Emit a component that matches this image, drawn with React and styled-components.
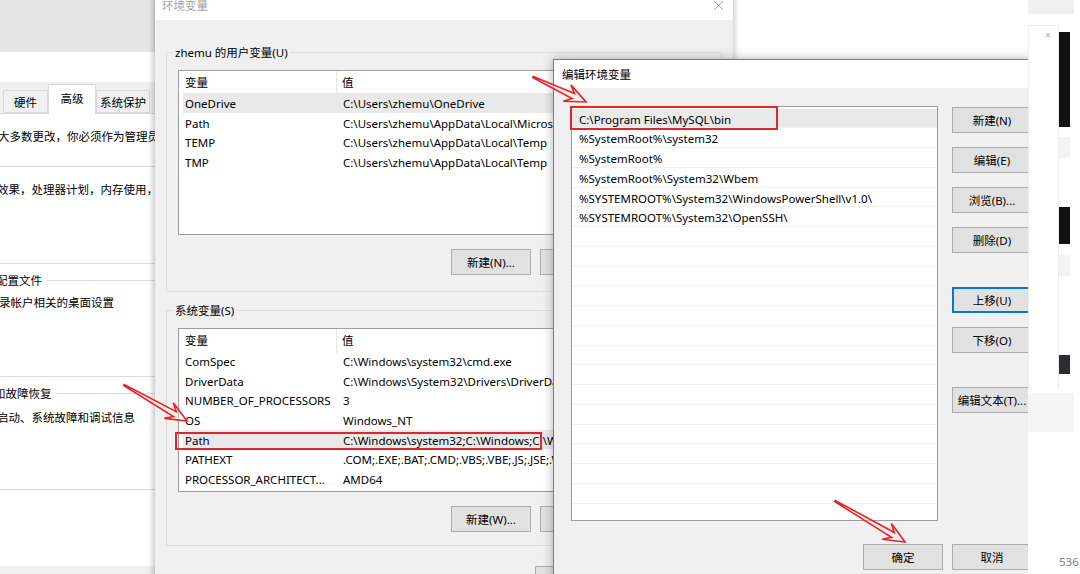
import React from 'react';
import styled, { createGlobalStyle } from 'styled-components';

const Global = createGlobalStyle`
  html, body { margin: 0; padding: 0; background: #fff; }
  body {
    width: 1080px; height: 574px; overflow: hidden;
    font-family: "Noto Sans", "Noto Sans CJK SC", sans-serif;
    font-size: 11.5px; color: #000;
  }
  * { box-sizing: border-box; }
`;

const Desktop = styled.div`
  position: relative; width: 1080px; height: 574px; overflow: hidden; background: #fff;
`;

/* ---------- System properties (behind, left) ---------- */
const SysWin = styled.div`
  position: absolute; left: 0; top: 0; width: 160px; height: 574px;
  background: #fff; display: flex; flex-direction: column; overflow: hidden; z-index: 1;
`;
const SysTop = styled.div`height: 52px; background: #e6e6e6; flex: none;`;
const TabStrip = styled.div`
  margin-top: 30px; height: 32px; background: #f0f0f0; flex: none;
  display: flex; align-items: flex-end; padding-left: 3px;
  border-bottom: 1px solid #d9d9d9;
`;
const Tab = styled.div`
  width: ${p => p.$w}px; height: ${p => (p.$active ? 30 : 23)}px;
  margin-bottom: ${p => (p.$active ? -1 : 0)}px;
  background: ${p => (p.$active ? '#fff' : '#f0f0f0')};
  border: 1px solid #d9d9d9; border-bottom: ${p => (p.$active ? 'none' : '1px solid #d9d9d9')};
  display: flex; align-items: ${p => (p.$active ? 'flex-start' : 'center')};
  padding-top: ${p => (p.$active ? 5 : 0)}px;
  justify-content: center; flex: none;
`;
const SysBody = styled.div`flex: 1; display: flex; flex-direction: column; background: #fff;`;
const Clip = styled.div`
  white-space: nowrap; line-height: 18px; height: 18px;
  margin-top: ${p => p.$mt}px; margin-left: -${p => p.$shift}px; flex: none;
`;
const Rule = styled.div`height: 1px; background: #dcdcdc; margin-top: ${p => p.$mt}px; flex: none;`;
const LabelRow = styled.div`
  display: flex; align-items: center; height: 18px; flex: none;
  margin-top: ${p => p.$mt}px; margin-left: -${p => p.$shift}px; white-space: nowrap;
  &::after { content: ''; flex: 1; height: 1px; background: #dcdcdc; margin-left: 4px; }
`;
const SysFoot = styled.div`margin-top: auto; height: 8px; background: #f0f0f0; flex: none;`;

/* ---------- Environment variables window ---------- */
const EnvWin = styled.div`
  position: absolute; left: 155px; top: -10px; width: 578px; height: 600px;
  background: #f0f0f0; z-index: 2; overflow: hidden;
  box-shadow: -2px 0 6px rgba(0,0,0,0.22), 2px 0 6px rgba(0,0,0,0.15);
  display: flex; flex-direction: column;
`;
const TitleBar = styled.div`
  height: ${p => p.$h}px; background: #fff; flex: none;
  display: flex; align-items: center; padding-left: ${p => p.$pl}px;
  color: ${p => (p.$inactive ? '#a3a3a3' : '#000')};
`;
const TitleText = styled.span`flex: 1;`;
const CloseX = styled.svg`width: 11px; height: 11px; margin-right: 9px; flex: none;`;
const EnvBody = styled.div`padding: 0 11px; display: flex; flex-direction: column;`;
const Group = styled.div`
  position: relative; margin-top: ${p => p.$mt}px;
  border: 1px solid #dcdcdc; padding: 17px 11px ${p => p.$pb}px 11px;
`;
const Legend = styled.span`
  position: absolute; top: -8px; left: 6px; padding: 0 2px;
  background: #f0f0f0; line-height: 16px; white-space: nowrap;
`;
const ListBox = styled.div`
  height: ${p => p.$h}px; background: #fff; border: 1px solid #9c9c9c;
`;
const Header = styled.div`
  display: grid; grid-template-columns: 158px 1fr; height: 22px; line-height: 24px;
`;
const HeadCell = styled.div`
  padding-left: ${p => (p.$first ? 6 : 5)}px;
  border-right: ${p => (p.$first ? '1px solid #e5e5e5' : 'none')};
`;
const VarRow = styled.div`
  position: relative; display: grid; grid-template-columns: 154px 1fr;
  margin-left: 4px; height: 19.7px;
  background: ${p => (p.$sel ? '#e9e9e9' : 'transparent')};
`;
const Cell = styled.div`
  white-space: nowrap; overflow: hidden; height: 19.7px; line-height: 21.5px;
  padding-left: ${p => (p.$first ? 2 : 6)}px;
`;
const Mark = styled.div`
  position: absolute; pointer-events: none;
  left: ${p => p.$l}px; top: ${p => p.$t}px; width: ${p => p.$w}px; height: ${p => p.$h}px;
  border: 2px solid #e3252b;
`;
const BtnRow = styled.div`
  display: flex; justify-content: flex-end; gap: 9px;
  margin-top: ${p => p.$mt}px; padding-right: ${p => p.$pr}px;
`;
const Btn = styled.div`
  width: 80px; height: 26px; flex: none;
  background: #e1e1e1; border: ${p => (p.$focus ? '2px solid #0078d7' : '1px solid #adadad')};
  display: flex; align-items: center; justify-content: center; white-space: nowrap;
`;

/* ---------- Edit environment variable window ---------- */
const EditWin = styled.div`
  position: absolute; left: 553px; top: 59px; width: 480px; height: 530px;
  background: #f0f0f0; border: 1px solid #7d7d7d; z-index: 3; overflow: hidden;
  box-shadow: 0 0 10px rgba(0,0,0,0.3);
  display: flex; flex-direction: column;
`;
const EditBody = styled.div`padding: 18px 0 0 17px; display: flex; flex-direction: column;`;
const EditMain = styled.div`display: flex; align-items: flex-start;`;
const EditList = styled.div`
  width: 367px; height: 415px; background: #fff; border: 1px solid #9c9c9c;
  padding-top: 1.5px; flex: none; display: flex; flex-direction: column;
`;
const EditRows = styled.div`overflow: hidden; flex: 1; display: flex; flex-direction: column;`;
const EditRow = styled.div`
  height: 19.75px; line-height: 21px; flex: none; overflow: hidden;
  border-bottom: 1px solid #f0f0f0; padding-left: 7px; white-space: nowrap;
  background: ${p => (p.$sel ? '#e9e9e9' : '#fff')};
`;
const BtnCol = styled.div`
  margin-left: 14px; padding-top: 1px; display: flex; flex-direction: column; gap: 34px;
`;
const BtnGroup = styled.div`display: flex; flex-direction: column; gap: 14px;`;

/* ---------- right strip (another window) ---------- */
const Strip = styled.div`
  position: absolute; left: 1028px; top: 0; width: 52px; height: 574px;
  background: #fff; z-index: 4; display: flex; flex-direction: column;
`;
const StripTop = styled.div`width: 46px; height: 14px; background: #f0f0f0; flex: none;`;
const PaneRow = styled.div`margin-top: 11px; height: 365px; display: flex; flex: none;`;
const Pane = styled.div`
  width: 31px; border-left: 1px solid #f0f0f0; border-top: 1px solid #ececec;
  border-right: 1px solid #ececec; display: flex; justify-content: flex-end;
  padding: 3px 7px 0 0; color: #b0b0b0; font-size: 11px; line-height: 11px;
`;
const BarCol = styled.div`width: 11px; display: flex; flex-direction: column;`;
const Bar = styled.div`
  margin-top: ${p => p.$mt}px; height: ${p => p.$h}px; background: ${p => p.$c}; flex: none;
`;
const StripBlock = styled.div`margin-top: 3px; width: 46px; height: 39px; background: #f5f5f5; flex: none;`;
const PageNo = styled.div`margin-top: 123px; padding-left: 31px; line-height: 14px; color: #808080;`;

const Overlay = styled.svg`position: absolute; left: 0; top: 0; z-index: 5; pointer-events: none;`;

function arrowPoints([x1, y1], [x2, y2]) {
  const dx = x2 - x1, dy = y2 - y1, L = Math.hypot(dx, dy);
  const ux = dx / L, uy = dy / L, nx = -uy, ny = ux;
  const p = (t, w) => `${(x1 + ux * t + nx * w).toFixed(1)},${(y1 + uy * t + ny * w).toFixed(1)}`;
  return [p(0, 0.6), p(L - 14, 2.8), p(L - 21, 9), p(L, 0), p(L - 21, -9), p(L - 14, -2.8), p(0, -0.6)].join(' ');
}

const Close = () => (
  <CloseX viewBox="0 0 11 11">
    <path d="M1 1 L10 10 M10 1 L1 10" stroke="#a0a0a0" strokeWidth="1" fill="none" />
  </CloseX>
);

const userVars = [
  ['OneDrive', 'C:\\Users\\zhemu\\OneDrive', true],
  ['Path', 'C:\\Users\\zhemu\\AppData\\Local\\Microsoft\\WindowsApps;'],
  ['TEMP', 'C:\\Users\\zhemu\\AppData\\Local\\Temp'],
  ['TMP', 'C:\\Users\\zhemu\\AppData\\Local\\Temp'],
];
const sysVars = [
  ['ComSpec', 'C:\\Windows\\system32\\cmd.exe'],
  ['DriverData', 'C:\\Windows\\System32\\Drivers\\DriverData'],
  ['NUMBER_OF_PROCESSORS', '3'],
  ['OS', 'Windows_NT'],
  ['Path', 'C:\\Windows\\system32;C:\\Windows;C:\\Windows\\System32\\Wbem;', true, true],
  ['PATHEXT', '.COM;.EXE;.BAT;.CMD;.VBS;.VBE;.JS;.JSE;.WSF;.WSH;.MSC'],
  ['PROCESSOR_ARCHITECT...', 'AMD64'],
];
const pathEntries = [
  'C:\\Program Files\\MySQL\\bin',
  '%SystemRoot%\\system32',
  '%SystemRoot%',
  '%SystemRoot%\\System32\\Wbem',
  '%SYSTEMROOT%\\System32\\WindowsPowerShell\\v1.0\\',
  '%SYSTEMROOT%\\System32\\OpenSSH\\',
];

function VarList({ rows, h }) {
  return (
    <ListBox $h={h}>
      <Header>
        <HeadCell $first>变量</HeadCell>
        <HeadCell>值</HeadCell>
      </Header>
      {rows.map(([n, v, sel, mark]) => (
        <VarRow key={n + v} $sel={sel}>
          <Cell $first>{n}</Cell>
          <Cell>{v}</Cell>
          {mark && <Mark $l={-8} $t={2} $w={367} $h={18} />}
        </VarRow>
      ))}
    </ListBox>
  );
}

export default function App() {
  const empty = Array.from({ length: 16 });
  return (
    <Desktop>
      <Global />

      <SysWin>
        <SysTop />
        <TabStrip>
          <Tab $w={45}>硬件</Tab>
          <Tab $w={48} $active>高级</Tab>
          <Tab $w={54}>系统保护</Tab>
        </TabStrip>
        <SysBody>
          <Clip $mt={14} $shift={48}>若要进行大多数更改，你必须作为管理员登录。</Clip>
          <Rule $mt={20} />
          <Clip $mt={14} $shift={26}>视觉效果，处理器计划，内存使用，以及虚拟内存</Clip>
          <Rule $mt={64} />
          <LabelRow $mt={7} $shift={27}>用户配置文件</LabelRow>
          <Clip $mt={5} $shift={24}>与登录帐户相关的桌面设置</Clip>
          <Rule $mt={64} />
          <LabelRow $mt={7} $shift={29}>启动和故障恢复</LabelRow>
          <Clip $mt={7} $shift={26}>系统启动、系统故障和调试信息</Clip>
          <Rule $mt={62} />
          <SysFoot />
        </SysBody>
      </SysWin>

      <EnvWin>
        <TitleBar $h={30} $pl={7} $inactive>
          <TitleText>环境变量</TitleText>
          <Close />
        </TitleBar>
        <EnvBody>
          <Group $mt={32} $pb={16}>
            <Legend>zhemu 的用户变量(U)</Legend>
            <VarList rows={userVars} h={165} />
            <BtnRow $mt={14} $pr={1}>
              <Btn>新建(N)...</Btn>
              <Btn>编辑(E)...</Btn>
              <Btn>删除(D)</Btn>
            </BtnRow>
          </Group>
          <Group $mt={18} $pb={13}>
            <Legend>系统变量(S)</Legend>
            <VarList rows={sysVars} h={164} />
            <BtnRow $mt={14} $pr={1}>
              <Btn>新建(W)...</Btn>
              <Btn>编辑(I)...</Btn>
              <Btn>删除(L)</Btn>
            </BtnRow>
          </Group>
          <BtnRow $mt={20} $pr={18}>
            <Btn>确定</Btn>
            <Btn>取消</Btn>
          </BtnRow>
        </EnvBody>
      </EnvWin>

      <EditWin>
        <TitleBar $h={28} $pl={8}>
          <TitleText>编辑环境变量</TitleText>
        </TitleBar>
        <EditBody>
          <EditMain>
            <EditList>
              <EditRows>
                {pathEntries.map((e, i) => (
                  <EditRow key={e} $sel={i === 0}>{e}</EditRow>
                ))}
                {empty.map((_, i) => (
                  <EditRow key={'e' + i} />
                ))}
              </EditRows>
            </EditList>
            <BtnCol>
              <BtnGroup>
                <Btn>新建(N)</Btn>
                <Btn>编辑(E)</Btn>
                <Btn>浏览(B)...</Btn>
                <Btn>删除(D)</Btn>
              </BtnGroup>
              <BtnGroup>
                <Btn $focus>上移(U)</Btn>
                <Btn>下移(O)</Btn>
              </BtnGroup>
              <BtnGroup>
                <Btn>编辑文本(T)...</Btn>
              </BtnGroup>
            </BtnCol>
          </EditMain>
          <BtnRow $mt={23} $pr={0}>
            <Btn>确定</Btn>
            <Btn>取消</Btn>
          </BtnRow>
        </EditBody>
      </EditWin>

      <Strip>
        <StripTop />
        <PaneRow>
          <Pane>×</Pane>
          <BarCol>
            <Bar $mt={7} $h={95} $c="#111" />
            <Bar $mt={10} $h={21} $c="#f3f3f3" />
            <Bar $mt={49} $h={37} $c="#111" />
            <Bar $mt={11} $h={21} $c="#f3f3f3" />
            <Bar $mt={79} $h={19} $c="#2b2e30" />
          </BarCol>
        </PaneRow>
        <StripBlock />
        <PageNo>536</PageNo>
      </Strip>

      <Overlay width="1080" height="574" viewBox="0 0 1080 574">
        {[
          [[533, 77], [586, 102]],
          [[124, 385], [187, 421]],
          [[835, 501], [905, 542]],
        ].map(([a, b], i) => (
          <polygon key={i} points={arrowPoints(a, b)} fill="rgba(255,235,235,0.35)"
            stroke="#e3252b" strokeWidth="1.6" strokeLinejoin="miter" />
        ))}
        <rect x="571" y="107" width="206" height="22" fill="none" stroke="#e3252b" strokeWidth="2" />
      </Overlay>
    </Desktop>
  );
}
